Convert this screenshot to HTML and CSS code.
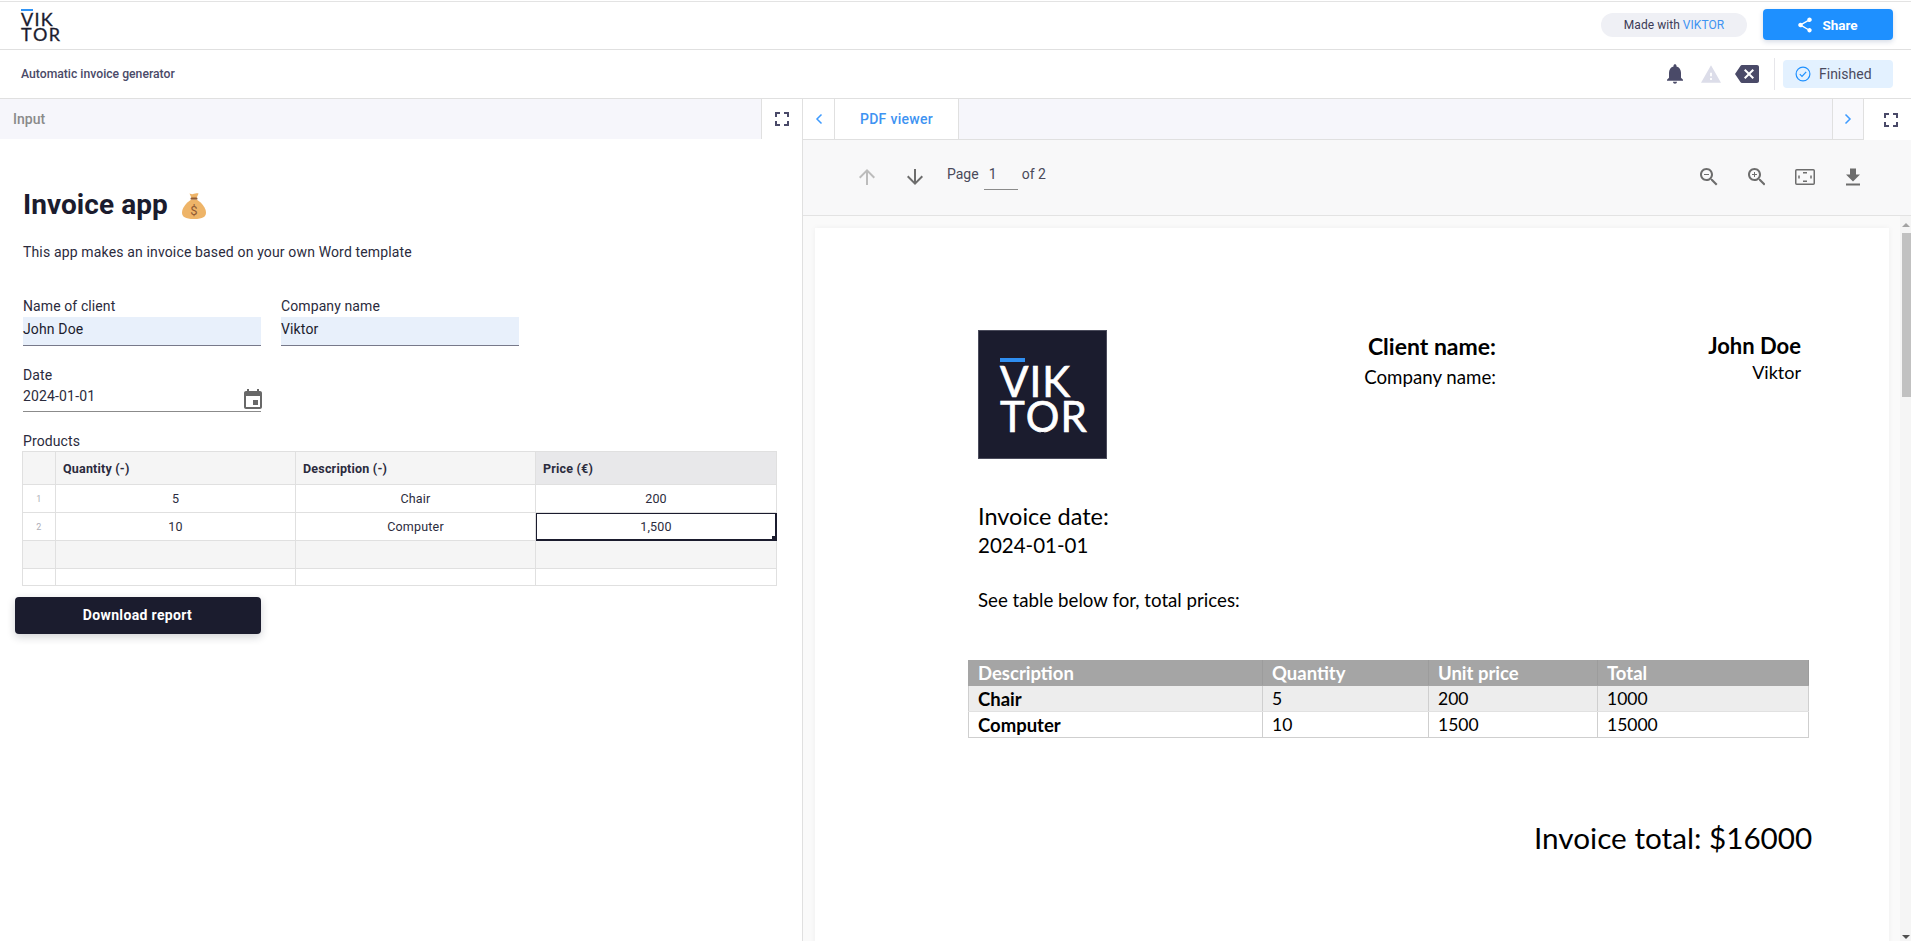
FILE: index.html
```html
<!DOCTYPE html>
<html lang="en">
<head>
<meta charset="utf-8">
<title>Automatic invoice generator</title>
<link rel="stylesheet" href="styles.css">
</head>
<body>
<div class="app">
  <header class="topbar">
    <div class="brand"><span class="brand-bar"></span><span>VIK</span><span>T<span class="st">O</span>R</span></div>
    <div class="topbar-right">
      <div class="made">Made with <span class="made-link">VIKTOR</span></div>
      <button class="share"><svg class="share-ico" viewBox="0 0 24 24"><path d="M18 16.08c-.76 0-1.44.3-1.96.77L8.91 12.7c.05-.23.09-.46.09-.7s-.04-.47-.09-.7l7.05-4.11c.54.5 1.25.81 2.04.81 1.66 0 3-1.34 3-3s-1.34-3-3-3-3 1.34-3 3c0 .24.04.47.09.7L8.04 9.81C7.5 9.31 6.79 9 6 9c-1.66 0-3 1.34-3 3s1.34 3 3 3c.79 0 1.5-.31 2.04-.81l7.12 4.16c-.05.21-.08.43-.08.65 0 1.61 1.31 2.92 2.92 2.92 1.61 0 2.92-1.31 2.92-2.92s-1.31-2.92-2.92-2.92z"/></svg>Share</button>
    </div>
  </header>
  <div class="subbar">
    <div class="app-name">Automatic invoice generator</div>
    <div class="status-icons">
      <svg class="ico-bell" viewBox="4 2.5 16 19.5"><path d="M12 22c1.1 0 2-.9 2-2h-4c0 1.1.89 2 2 2zm6-6v-5c0-3.07-1.64-5.64-4.5-6.32V4c0-.83-.67-1.5-1.5-1.5s-1.5.67-1.5 1.5v.68C7.63 5.36 6 7.92 6 11v5l-2 2v1h16v-1l-2-2z"/></svg>
      <svg class="ico-warn" viewBox="1 2 22 19"><path d="M1 21h22L12 2 1 21zm12-3h-2v-2h2v2zm0-4h-2v-4h2v4z"/></svg>
      <svg class="ico-back" viewBox="0 3 24 18"><path d="M22 3H7c-.69 0-1.23.35-1.59.88L0 12l5.41 8.11c.36.53.9.89 1.59.89h15c1.1 0 2-.9 2-2V5c0-1.1-.9-2-2-2zm-3 12.59L17.59 17 14 13.41 10.41 17 9 15.59 12.59 12 9 8.41 10.41 7 14 10.59 17.59 7 19 8.41 15.41 12 19 15.59z"/></svg>
      <div class="status-div"></div>
      <div class="finished"><svg class="ico-check" viewBox="0 0 16 16"><circle cx="8" cy="8" r="6.9"/><path d="M4.8 8.2l2.2 2.2 4.2-4.6"/></svg>Finished</div>
    </div>
  </div>
  <main class="panes">
    <section class="left">
      <div class="left-tabs">
        <span class="input-tab">Input</span>
        <div class="full-btn"><svg class="ico-full" viewBox="5 5 14 14"><path d="M7 14H5v5h5v-2H7v-3zm-2-4h2V7h3V5H5v5zm12 7h-3v2h5v-5h-2v3zM14 5v2h3v3h2V5h-5z"/></svg></div>
      </div>
      <div class="form">
        <div class="title-row">
          <h1>Invoice app</h1>
          <svg class="bag" viewBox="0 0 24 27"><path class="bag-fill" d="M7.5 1.5c2 .9 3.2.9 4.5.3 1.4-.7 3-.9 4.600-.2l-2.300 5h-4.600z"/><rect class="bag-tie" x="8.500" y="5.600" width="7" height="2.200" rx="1"/><path class="bag-fill" d="M9 7.800h6c4.500 3 9 8 9 12.700 0 4.300-3 6.500-12 6.500s-12-2.200-12-6.500c0-4.700 4.500-9.700 9-12.700z"/><text class="bag-sign" x="12" y="22.500">$</text></svg>
        </div>
        <p class="intro">This app makes an invoice based on your own Word template</p>
        <div class="field-row">
          <div class="field"><div class="label">Name of client</div><div class="input">John Doe</div></div>
          <div class="field"><div class="label">Company name</div><div class="input">Viktor</div></div>
        </div>
        <div class="field date-field">
          <div class="label">Date</div>
          <div class="date-input">2024-01-01<svg class="ico-cal" viewBox="3 1 18 20"><path d="M17 12h-5v5h5v-5zM16 1v2H8V1H6v2H5c-1.11 0-1.99.9-1.99 2L3 19c0 1.1.89 2 2 2h14c1.1 0 2-.9 2-2V5c0-1.1-.9-2-2-2h-1V1h-2zm3 18H5V8h14v11z"/></svg></div>
        </div>
        <div class="label products-label">Products</div>
        <table class="sheet">
          <colgroup><col class="c-idx"><col class="c-a"><col class="c-a"><col class="c-b"></colgroup>
          <tr class="sheet-head"><th></th><th>Quantity (-)</th><th>Description (-)</th><th class="active-col">Price (€)</th></tr>
          <tr><td class="idx">1</td><td>5</td><td>Chair</td><td>200</td></tr>
          <tr><td class="idx">2</td><td>10</td><td>Computer</td><td class="selected">1,500<span class="handle"></span></td></tr>
          <tr class="blank"><td></td><td></td><td></td><td></td></tr>
          <tr class="short"><td></td><td></td><td></td><td></td></tr>
        </table>
        <button class="download">Download report</button>
      </div>
    </section>
    <section class="right">
      <div class="right-tabs">
        <div class="tab-arrow"><svg class="chev" viewBox="0 0 8 12"><path d="M6.500 1.500L2 6l4.500 4.500"/></svg></div>
        <div class="tab-active">PDF viewer</div>
        <div class="tab-fill"></div>
        <div class="tab-arrow tab-arrow-r"><svg class="chev" viewBox="0 0 8 12"><path d="M1.500 1.500L6 6l-4.500 4.500"/></svg></div>
        <div class="full-btn full-btn-r"><svg class="ico-full" viewBox="5 5 14 14"><path d="M7 14H5v5h5v-2H7v-3zm-2-4h2V7h3V5H5v5zm12 7h-3v2h5v-5h-2v3zM14 5v2h3v3h2V5h-5z"/></svg></div>
      </div>
      <div class="pdf-bar">
        <svg class="ico-arrow ico-off" viewBox="4 4 16 16"><path d="M4 12l1.410 1.410L11 7.830V20h2V7.830l5.580 5.590L20 12l-8-8-8 8z"/></svg>
        <svg class="ico-arrow" viewBox="4 4 16 16"><path d="M20 12l-1.410-1.410L13 16.170V4h-2v12.170l-5.580-5.590L4 12l8 8 8-8z"/></svg>
        <div class="pager">Page <span class="page-num">1</span> of 2</div>
        <div class="pdf-tools">
          <svg class="ico-tool" viewBox="3 3 17.500 17.500"><path d="M15.500 14h-.79l-.28-.27C15.410 12.590 16 11.110 16 9.500 16 5.910 13.090 3 9.500 3S3 5.910 3 9.500 5.910 16 9.500 16c1.610 0 3.090-.59 4.230-1.570l.27.28v.79l5 4.990L20.490 19l-4.990-5zm-6 0C7.010 14 5 11.990 5 9.500S7.010 5 9.500 5 14 7.010 14 9.500 11.990 14 9.500 14zM7 9h5v1H7z"/></svg>
          <svg class="ico-tool" viewBox="3 3 17.500 17.500"><path d="M15.500 14h-.79l-.28-.27C15.410 12.590 16 11.110 16 9.500 16 5.910 13.090 3 9.500 3S3 5.910 3 9.500 5.910 16 9.500 16c1.610 0 3.090-.59 4.230-1.570l.27.28v.79l5 4.990L20.490 19l-4.990-5zm-6 0C7.010 14 5 11.990 5 9.500S7.010 5 9.500 5 14 7.010 14 9.500 11.990 14 9.500 14zM12 10h-2v2H9v-2H7V9h2V7h1v2h2v1z"/></svg>
          <svg class="ico-fit" viewBox="0 0 20 16"><rect x=".75" y=".75" width="18.500" height="14.500" rx="1"/><path d="M8 3.800h4M8 12.200h4M4 6.500v3M16 6.500v3"/></svg>
          <svg class="ico-dl" viewBox="5 3 14 17"><path d="M19 9h-4V3H9v6H5l7 7 7-7zM5 18v2h14v-2H5z"/></svg>
        </div>
      </div>
      <div class="pdf-view">
        <article class="page">
          <div class="doc-head">
            <div class="doc-logo"><span class="logo-bar"></span><span>VIK</span><span>T<span class="st">O</span>R</span></div>
            <div class="doc-labels"><div class="b-name client-label">Client name:</div><div class="company-label">Company name:</div></div>
            <div class="doc-values"><div class="b-name">John Doe</div><div class="company-value">Viktor</div></div>
          </div>
          <div class="doc-date"><div class="date-title">Invoice date:</div><div class="date-val">2024-01-01</div></div>
          <p class="doc-see">See table below for, total prices:</p>
          <table class="doc-table">
            <colgroup><col class="d1"><col class="d2"><col class="d3"><col class="d4"></colgroup>
            <tr class="dh"><th>Description</th><th>Quantity</th><th>Unit price</th><th>Total</th></tr>
            <tr class="alt"><th>Chair</th><td>5</td><td>200</td><td>1000</td></tr>
            <tr><th>Computer</th><td>10</td><td>1500</td><td>15000</td></tr>
          </table>
          <div class="doc-total">Invoice total: $16000</div>
        </article>
        <div class="scrollbar">
          <span class="sb-up"></span>
          <span class="sb-thumb"></span>
          <span class="sb-down"></span>
        </div>
      </div>
    </section>
  </main>
</div>
</body>
</html>
```
FILE: styles.css
```css
* { box-sizing: border-box; }
html, body { margin: 0; padding: 0; height: 941px; overflow: hidden; background: #fff; }
body { font-family: Roboto, "Liberation Sans", sans-serif; color: #1b1c2e; font-size: 14px; }
.app { width: 1911px; height: 941px; display: flex; flex-direction: column; overflow: hidden; }

.topbar { height: 49px; margin-top: 1px; border-top: 1px solid #e3e3e3; border-bottom: 1px solid #e0e0e0; display: flex; align-items: center; justify-content: space-between; padding: 0 18px 2px 21px; flex: none; }
.brand { position: relative; display: flex; flex-direction: column; font-family: Lato, sans-serif; font-size: 18px; line-height: 15px; letter-spacing: 1.300px; color: #1b1c2e; width: 42px; margin-top: 4px; padding-top: 1px; font-weight: 400; -webkit-text-stroke: .3px #1b1c2e; }
.brand-bar { position: absolute; left: 0; top: -2px; width: 12px; height: 2px; background: #2f93f5; }
.st { position: relative; }
.st::before, .st::after { content: ""; position: absolute; left: 44%; width: .07em; height: .16em; background: #fff; }
.st::before { top: .06em; }
.st::after { bottom: .06em; }
.doc-logo .st::before, .doc-logo .st::after { background: #1b1c2e; }
.topbar-right { display: flex; align-items: center; gap: 16px; }
.made { width: 146px; height: 24px; border-radius: 12px; background: #eff0f5; font-size: 12px; letter-spacing: .05px; display: flex; align-items: center; justify-content: center; gap: 3px; color: #3b3b55; margin-top: 1px; }
.made-link { color: #3e93f2; }
.share { width: 130px; height: 31px; border: 0; border-radius: 4px; background: #1e90ff; color: #fff; font: 700 13.500px Roboto, sans-serif; display: flex; align-items: center; justify-content: center; gap: 8px; padding: 0 2px 0 0; box-shadow: 0 2px 5px rgba(30,60,120,.18); }
.share-ico { width: 18px; height: 18px; fill: #fff; }

.subbar { height: 49px; flex: none; border-bottom: 1px solid #e0e0e0; display: flex; align-items: center; justify-content: space-between; padding: 0 18px 0 21px; }
.app-name { font-size: 12.200px; font-weight: 500; color: #4a4a68; }
.status-icons { display: flex; align-items: center; }
.ico-bell { width: 16px; height: 20px; fill: #4a4a68; }
.ico-warn { width: 20px; height: 18px; fill: #dcdde9; margin-left: 18px; }
.ico-back { width: 24px; height: 18px; fill: #4a4a68; margin-left: 14px; }
.status-div { width: 1px; height: 32px; background: #e6e6ea; margin: 0 8px 0 15px; }
.finished { width: 110px; height: 28px; background: #e3f1ff; border-radius: 4px; display: flex; align-items: center; padding-left: 12px; gap: 8px; font-size: 14px; color: #4a4a5e; }
.ico-check { width: 16px; height: 16px; fill: none; stroke: #1e90ff; stroke-width: 1.200; }

.panes { flex: 1; display: flex; min-height: 0; }
.left { flex: none; border-right: 1px solid #e0e0e0; width: 803px; }
.left-tabs { height: 40px; background: #f6f6fb; display: flex; align-items: center; justify-content: space-between; }
.input-tab { margin-left: 13px; font-weight: 500; font-size: 14px; color: #8a8a8a; }
.full-btn { width: 41px; height: 40px; background: #fff; border-left: 1px solid #e0e0e0; display: flex; align-items: center; justify-content: center; }
.ico-full { width: 14px; height: 14px; fill: #4a4a68; }

.form { padding: 0 26px 0 23px; }
.title-row { display: flex; align-items: center; margin-top: 49px; height: 34px; }
h1 { margin: 0; font-size: 28px; font-weight: 700; color: #1b1c2e; line-height: 34px; letter-spacing: .05px; }
.bag { width: 24px; height: 27px; margin-left: 14px; }
.bag-fill { fill: #eeb468; }
.bag-tie { fill: #8e5a35; }
.bag-sign { font-family: Roboto, sans-serif; font-size: 13px; fill: #8e5a35; text-anchor: middle; }
.intro { margin: 21px 0 0; font-size: 14px; line-height: 18px; color: #2b2b3d; letter-spacing: .15px; }
.field-row { display: flex; gap: 20px; margin-top: 36px; }
.field { width: 238px; }
.label { font-size: 14px; line-height: 18px; color: #2b2b3d; letter-spacing: .1px; }
.input { height: 29px; margin-top: 2px; background: #e8f0fb; border-bottom: 1px solid #77798a; font-size: 14px; line-height: 25px; color: #1b1c2e; letter-spacing: .15px; }
.date-field { margin-top: 20px; }
.date-input { position: relative; height: 28px; line-height: 24px; border-bottom: 1px solid #8b8b8b; font-size: 14px; color: #2b2b3d; letter-spacing: .15px; }
.ico-cal { position: absolute; right: -1px; top: 5px; width: 18px; height: 20px; fill: #686868; }
.products-label { margin-top: 20px; }
.sheet { margin: 1px 0 0 -1px; border-collapse: collapse; table-layout: fixed; width: 755px; height: 134px; font-size: 12.500px; letter-spacing: .2px; color: #2b2b3d; }
.c-idx { width: 33px; }
.c-a { width: 240px; }
.c-b { width: 241px; }
.sheet th, .sheet td { border: 1px solid #e0e0e0; padding: 0; height: 28px; text-align: center; }
.sheet-head th { height: 33px; background: #f5f5f5; text-align: left; padding-left: 7px; font-weight: 700; color: #2b2b3d; }
.sheet-head .active-col { background: #e8e8ea; }
.sheet .idx { font-size: 9px; color: #aeaeb8; }
.sheet .blank td { background: #f5f5f5; }
.sheet .short td { height: 17px; }
.sheet .selected { position: relative; box-shadow: inset 0 0 0 1px #1b1c2e; border: 1px solid #1b1c2e; }
.handle { position: absolute; right: 0; bottom: 0; width: 4px; height: 4px; background: #1b1c2e; }
.download { display: block; margin: 11px 0 0 -8px; width: 246px; height: 37px; border: 0; border-radius: 4px; background: #1b1c2e; color: #fff; font: 700 14px Roboto, sans-serif; letter-spacing: .35px; box-shadow: 0 3px 8px rgba(27,28,46,.2); padding: 0 1px 2px 0; }

.right { flex: 1; min-width: 0; display: flex; flex-direction: column; }
.right-tabs { height: 41px; display: flex; flex: none; background: #f6f6fb; border-bottom: 1px solid #e0e0e0; }
.tab-arrow { width: 32px; background: #fff; border-right: 1px solid #e0e0e0; display: flex; align-items: center; justify-content: center; }
.tab-arrow-r { background: #f9f9fc; border-left: 1px solid #e0e0e0; border-right: 1px solid #e0e0e0; width: 32px; }
.chev { width: 8px; height: 12px; fill: none; stroke: #3d9bff; stroke-width: 1.500; }
.tab-active { width: 124px; background: #fff; color: #3e93f2; font-weight: 500; font-size: 14px; letter-spacing: .3px; border-right: 1px solid #e0e0e0; display: flex; align-items: center; justify-content: center; }
.tab-fill { flex: 1; }
.full-btn-r { width: 47px; height: 41px; border-left: 0; padding-left: 6px; }

.pdf-bar { height: 76px; flex: none; background: #f8f8f9; border-bottom: 1px solid #e3e3e3; display: flex; align-items: flex-start; padding: 29px 51px 0 56px; }
.ico-arrow { width: 16px; height: 16px; fill: #6d6d6d; margin-right: 32px; }
.ico-off { fill: #bcbcbc; }
.pager { margin: -6px 0 0 -8px; font-size: 14px; line-height: 22px; color: #4a4a5a; display: flex; align-items: flex-start; height: 32px; }
.page-num { width: 34px; height: 27px; margin: 0 4px 0 5px; padding-left: 5px; border-bottom: 1px solid #8b8b8b; }
.pdf-tools { margin-left: auto; display: flex; align-items: flex-start; margin-top: -1px; }
.ico-tool { width: 17.500px; height: 17.500px; fill: #6d6d6d; margin-right: 30px; }
.ico-fit { width: 20px; height: 16px; fill: none; stroke: #6d6d6d; stroke-width: 1.500; margin-top: 1px; margin-right: 31px; }
.ico-dl { width: 14px; height: 18px; fill: #6d6d6d; }

.pdf-view { flex: 1; min-height: 0; display: flex; background: #fafafa; padding: 12px 0 0 12px; overflow: hidden; }
.page { width: 1074px; height: 1400px; flex: none; background: #fff; box-shadow: 0 0 6px rgba(0,0,0,.05); padding: 102px 0 0 163px; color: #000; font-family: Lato, sans-serif; }
.doc-head { display: flex; align-items: flex-start; width: 823px; height: 129px; }
.doc-logo { position: relative; width: 129px; height: 129px; background: #1b1c2e; border: 1px solid #4b4c5c; color: #fff; font-size: 42px; line-height: 35px; letter-spacing: 1px; padding: 33px 0 0 21px; display: flex; flex-direction: column; font-family: Lato, sans-serif; -webkit-text-stroke: .7px #fff; }
.logo-bar { position: absolute; left: 21px; top: 27px; width: 25px; height: 4px; background: #2f8ef0; }
.doc-labels { margin-left: 258px; width: 131px; text-align: right; white-space: nowrap; display: flex; flex-direction: column; align-items: flex-end; }
.doc-values { margin-left: auto; text-align: right; }
.b-name { font-size: 22px; font-weight: 700; line-height: 28px; margin-top: 2px; }
.client-label { font-size: 23px; }
.company-label { font-size: 18.700px; line-height: 24px; margin-top: 5px; }
.company-value { font-size: 18px; line-height: 24px; }
.doc-date { margin-top: 43px; line-height: 29px; }
.date-title { font-size: 23.500px; }
.date-val { font-size: 20.500px; }
.doc-see { margin: 28px 0 0; font-size: 18.700px; line-height: 24px; }
.doc-table { margin: 48px 0 0 -10px; border-collapse: collapse; table-layout: fixed; width: 840px; font-size: 17.500px; }
.d1 { width: 294px; }
.d2 { width: 166px; }
.d3 { width: 169px; }
.d4 { width: 211px; }
.doc-table th, .doc-table td { height: 26px; padding: 0 0 0 9px; border: 1px solid #cfcfcf; text-align: left; line-height: 22px; }
.doc-table th { font-weight: 700; font-size: 18.500px; }
.dh th { height: 25px; background: #a5a5a5; color: #fff; border-color: #a5a5a5; border-right-color: #9c9c9c; }
.alt th, .alt td { background: #ededed; border-bottom-color: #e1e1e1; border-top-color: #dcdcdc; }
.doc-total { margin: 82px 0 0 556px; font-size: 29.700px; line-height: 36px; white-space: nowrap; }

.scrollbar { position: relative; width: 11px; margin-left: 11px; flex: none; margin-top: -12px; background: #f5f5f5; display: flex; flex-direction: column; align-items: center; }
.sb-up { width: 0; height: 0; margin-top: 7px; border-left: 4px solid transparent; border-right: 4px solid transparent; border-bottom: 4px solid #a3a3a3; }
.sb-thumb { width: 9px; height: 164px; margin: 6px 0 0 2px; background: #c1c1c1; }
.sb-down { width: 0; height: 0; margin-top: auto; margin-bottom: 2px; border-left: 4px solid transparent; border-right: 4px solid transparent; border-top: 4px solid #505050; }
```
